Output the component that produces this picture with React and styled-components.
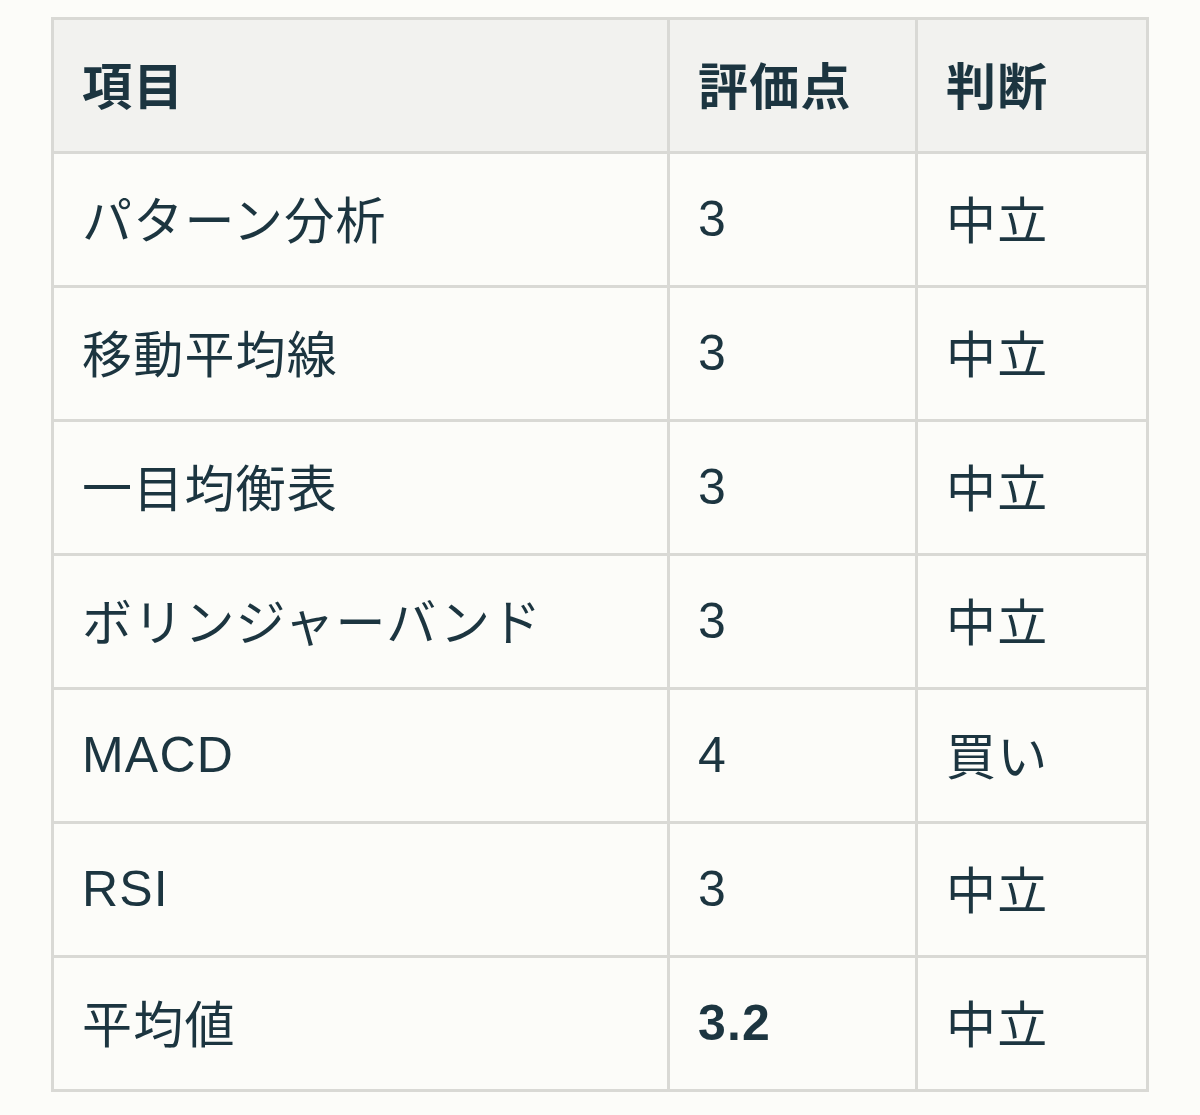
import React from "react";
import styled, { createGlobalStyle } from "styled-components";

const Global = createGlobalStyle`
  html, body { margin: 0; padding: 0; background: #fcfcf9; }
  body { font-family: "Liberation Sans", "Noto Sans CJK JP", sans-serif; }
`;

const Page = styled.div`
  padding: 17px 0 0 51px;
  background: #fcfcf9;
  min-height: 1115px;
  box-sizing: border-box;
`;

const Table = styled.table`
  border-collapse: collapse;
  width: 1095px;
  table-layout: fixed;
  color: #1c3540;
  font-size: 50px;
  letter-spacing: 1.2px;
`;

const Col = styled.col`
  width: ${(p) => p.$w}px;
`;

const HeadCell = styled.th`
  background: #f2f2ef;
  border: 3px solid #d9d9d5;
  height: 134px;
  padding: 0 28px 6px;
  text-align: left;
  font-weight: 700;
  vertical-align: middle;
  box-sizing: border-box;
`;

const Cell = styled.td`
  border: 3px solid #d9d9d5;
  height: 134px;
  padding: ${(p) => (p.$num ? "0 28px 2px" : "0 28px 5px")};
  text-align: left;
  font-weight: ${(p) => (p.$bold ? 700 : 400)};
  vertical-align: middle;
  box-sizing: border-box;
`;

const rows = [
  ["パターン分析", "3", "中立"],
  ["移動平均線", "3", "中立"],
  ["一目均衡表", "3", "中立"],
  ["ボリンジャーバンド", "3", "中立"],
  ["MACD", "4", "買い"],
  ["RSI", "3", "中立"],
];

export default function App() {
  return (
    <Page>
      <Global />
      <Table>
        <colgroup>
          <Col $w={616} />
          <Col $w={248} />
          <Col $w={231} />
        </colgroup>
        <thead>
          <tr>
            <HeadCell>項目</HeadCell>
            <HeadCell>評価点</HeadCell>
            <HeadCell>判断</HeadCell>
          </tr>
        </thead>
        <tbody>
          {rows.map((r) => (
            <tr key={r[0]}>
              <Cell $num={/^[A-Z]/.test(r[0])}>{r[0]}</Cell>
              <Cell $num>{r[1]}</Cell>
              <Cell>{r[2]}</Cell>
            </tr>
          ))}
          <tr>
            <Cell>平均値</Cell>
            <Cell $num $bold>3.2</Cell>
            <Cell>中立</Cell>
          </tr>
        </tbody>
      </Table>
    </Page>
  );
}
